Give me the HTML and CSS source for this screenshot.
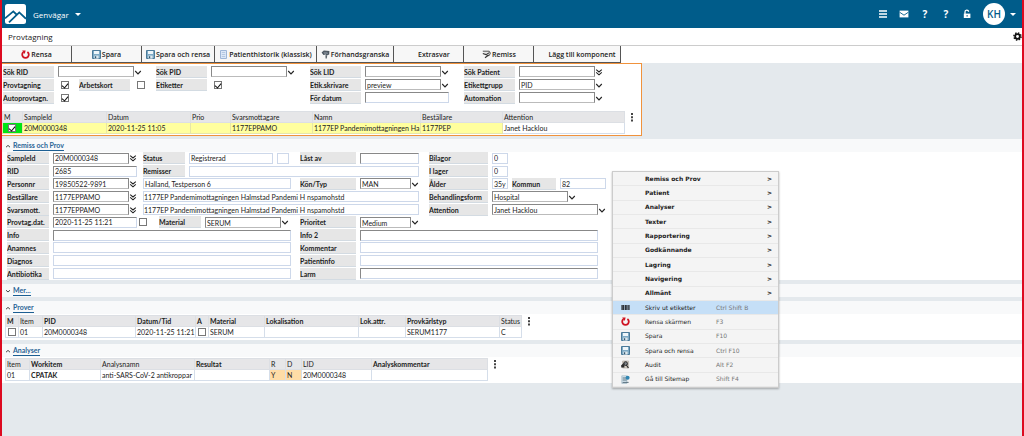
FILE: index.html
```html
<!DOCTYPE html>
<html lang="sv">
<head>
<meta charset="utf-8">
<title>Provtagning</title>
<link rel="stylesheet" href="styles.css">
</head>
<body>
<svg class="defs" aria-hidden="true">
  <symbol id="chev" viewBox="0 0 8 8"><path d="M1.2 3 4 6 6.8 3" fill="none" stroke="#222" stroke-width="1.1"/></symbol>
  <symbol id="dchev" viewBox="0 0 8 8"><path d="M1.2 1.6 4 4 6.8 1.6M1.2 4.4 4 6.8 6.8 4.4" fill="none" stroke="#222" stroke-width="1.1"/></symbol>
  <symbol id="up" viewBox="0 0 6 6"><path d="M1 4.2 3 2.4 5 4.2" fill="none" stroke="#333" stroke-width=".9"/></symbol>
  <symbol id="down" viewBox="0 0 6 6"><path d="M1 2.2 3 4 5 2.2" fill="none" stroke="#333" stroke-width=".9"/></symbol>
  <symbol id="reset" viewBox="0 0 9 9"><path d="M2.6 1.9A3.3 3.3 0 1 0 6.4 1.9" fill="none" stroke="#cf1322" stroke-width="1.8"/><path d="M1.2.4 4.6.6 3.8 4z" fill="#cf1322"/></symbol>
  <symbol id="save" viewBox="0 0 9 9"><path d="M.5.5h8v8h-8z" fill="#7fabc6" stroke="#4b7a99"/><path d="M2 1h5v3H2z" fill="#eef6fa"/><path d="M2.4 5.6h4.2v3H2.4z" fill="#dde8ee"/><path d="M3 6.2h1.2v2H3z" fill="#32566e"/></symbol>
  <symbol id="doc" viewBox="0 0 9 9"><path d="M1.5.5h6v8h-6z" fill="#dce8f8" stroke="#9db6d8"/><path d="M2.8 2.5h3.4M2.8 4.5h3.4M2.8 6.5h3.4" stroke="#a9bfdc" stroke-width=".8"/></symbol>
  <symbol id="preview" viewBox="0 0 9 9"><path d="M.6 2.4 2.8.6 8.4 1 8.2 4.4 5.6 5.6 4.8 4.6 2.4 5z" fill="#4d5761"/><path d="M2.5 2.4h4M3 3.6h4" stroke="#9aa5ae" stroke-width=".6"/><path d="M4.4 5.2h1.8L5.8 8.6H4.6z" fill="#59636b"/></symbol>
  <symbol id="remiss" viewBox="0 0 9 9"><path d="M.8 1.2h6.4l1.2 2-1.2 2.4H4.6" fill="#e7e7e7" stroke="#444" stroke-width=".9"/><path d="M.8 3.4 4 4.6 7.4 2.6M3 7.8 6.6 5" fill="none" stroke="#333" stroke-width="1.1"/></symbol>
  <symbol id="barcode" viewBox="0 0 9 9"><path d="M.4 2h3v5h-3zM4 2h1.8v5H4zM6.4 2h2.2v5H6.4z" fill="#2e3238"/><path d="M1.6 2v5M7.5 2v5" stroke="#7b8694" stroke-width=".4"/></symbol>
  <symbol id="audit" viewBox="0 0 9 9"><path d="M1.6 1h6v7h-6z" fill="#d9d2c8" stroke="#aaa198" stroke-width=".6"/><circle cx="4.6" cy="3.6" r="1.9" fill="#7a7f84" stroke="#2c2c2c"/><path d="M1 5.2 3.4 3.6M5.4 5 7.4 8M.8 5.6h2v1.2h-2z" fill="none" stroke="#2c2c2c" stroke-width="1.2"/></symbol>
  <symbol id="sitemap" viewBox="0 0 9 9"><path d="M.8.8h5v7.6h-5z" fill="#d6e6ef" stroke="#8fa9b8" stroke-width=".6"/><path d="M1.6 3h3.4M1.6 5h4M1.6 7.4h6" stroke="#4d6472" stroke-width=".9"/><circle cx="6.6" cy="2.8" r="2" fill="#2f86b3"/></symbol>
  <symbol id="dots" viewBox="0 0 4 9"><path d="M1 0h2v2H1zM1 3.3h2v2H1zM1 6.6h2v2H1z" fill="#444"/></symbol>
</svg>

<header class="topbar">
  <svg class="logo" viewBox="0 0 21 20" role="img" aria-label="Logotyp"><rect width="21" height="20" rx="2.5" fill="#fff"/><path d="M0 14.4 8.3 7.4 12 11M4 18.4 14.3 8.4 21 14.8" fill="none" stroke="#005c8a" stroke-width="1.8"/></svg>
  <button class="shortcuts">Genvägar <span class="caret"></span></button>
  <nav class="tools" aria-label="Verktyg">
    <button aria-label="Meny"><svg viewBox="0 0 10 10"><path d="M1 2h8M1 5h8M1 8h8" stroke="#fff" stroke-width="1.5"/></svg></button>
    <button aria-label="Meddelanden"><svg viewBox="0 0 10 10"><path d="M.6 1.6h8.8v6.8H.6z" fill="#fff"/><path d="M.6 3.2 5 6.2 9.4 3.2" fill="none" stroke="#005c8a" stroke-width=".9"/></svg></button>
    <button class="q">?</button>
    <button class="q">?</button>
    <button aria-label="Lås"><svg viewBox="0 0 10 10"><path d="M1.8 4.6h6.6v4.4H1.8z" fill="#fff"/><path d="M3 5V3a1.8 1.8 0 0 1 3.6-.2" fill="none" stroke="#fff" stroke-width="1.3"/><path d="M5.1 6v1.6" stroke="#005c8a"/></svg></button>
    <button class="user"><span class="avatar">KH</span><span class="caret"></span></button>
  </nav>
</header>

<div class="titlebar">
  <h1>Provtagning</h1>
  <button class="gear" aria-label="Inställningar"><svg viewBox="0 0 10 10"><circle cx="5" cy="5" r="2.6" fill="none" stroke="#111" stroke-width="2"/><circle cx="5" cy="5" r="4" fill="none" stroke="#111" stroke-width="1.6" stroke-dasharray="1.6 1.54"/></svg></button>
</div>

<div class="toolbar">
  <button><svg><use href="#reset"/></svg>Rensa</button>
  <button><svg><use href="#save"/></svg>Spara</button>
  <button><svg><use href="#save"/></svg>Spara och rensa</button>
  <button><svg><use href="#doc"/></svg>Patienthistorik (klassisk)</button>
  <button><svg><use href="#preview"/></svg>Förhandsgranska</button>
  <button><svg></svg>Extrasvar</button>
  <button><svg><use href="#remiss"/></svg>Remiss</button>
  <button><svg></svg>Lägg till komponent</button>
</div>

<main>
  <section class="search">
    <div class="filters">
      <div class="cell"><label for="s1">Sök RID</label><span class="combo"><select id="s1"><option></option></select><svg><use href="#chev"/></svg></span></div>
      <div class="cell"><label for="s2">Sök PID</label><span class="combo"><select id="s2"><option></option></select><svg><use href="#chev"/></svg></span></div>
      <div class="cell"><label for="s3">Sök LID</label><span class="combo"><select id="s3"><option></option></select><svg><use href="#chev"/></svg></span></div>
      <div class="cell"><label for="s4">Sök Patient</label><span class="combo"><input id="s4"><button aria-label="Sök"><svg><use href="#dchev"/></svg></button></span></div>

      <div class="cell"><label for="c1">Provtagning</label><input type="checkbox" id="c1" checked><label for="c2">Arbetskort</label><input type="checkbox" id="c2"></div>
      <div class="cell"><label for="c3">Etiketter</label><input type="checkbox" id="c3" checked></div>
      <div class="cell"><label for="s5">Etik.skrivare</label><span class="combo"><select id="s5"><option>preview</option></select><svg><use href="#chev"/></svg></span></div>
      <div class="cell"><label for="s6">Etikettgrupp</label><span class="combo"><select id="s6"><option>PID</option></select><svg><use href="#chev"/></svg></span></div>

      <div class="cell"><label for="c4">Autoprovtagn.</label><input type="checkbox" id="c4" checked></div>
      <div class="cell"></div>
      <div class="cell"><label for="s7">För datum</label><input class="full sunk" id="s7"></div>
      <div class="cell"><label for="s8">Automation</label><span class="combo"><select id="s8"><option></option></select><svg><use href="#chev"/></svg></span></div>
    </div>
    <div class="tablewrap">
      <table class="grid results">
        <colgroup><col class="c20"><col class="c84"><col class="c84"><col class="c40"><col class="c82"><col class="c108"><col class="c82"><col class="c122"></colgroup>
        <thead><tr><th>M</th><th>SampleId</th><th>Datum</th><th>Prio</th><th>Svarsmottagare</th><th>Namn</th><th>Beställare</th><th>Attention</th></tr></thead>
        <tbody><tr class="hit"><td class="mark"><input type="checkbox" aria-label="Markera 20M0000348" checked></td><td>20M0000348</td><td>2020-11-25 11:05</td><td></td><td>1177EPPAMO</td><td>1177EP Pandemimottagningen Ha</td><td>1177PEP</td><td class="plain">Janet Hacklou</td></tr></tbody>
      </table>
      <button class="more" aria-label="Fler val"><svg><use href="#dots"/></svg></button>
    </div>
  </section>

  <section class="panel">
    <h2><svg><use href="#up"/></svg><a href="#remiss-prov">Remiss och Prov</a></h2>
    <div class="form" id="remiss-prov">
      <div class="row">
        <div class="left"><label for="f1">SampleId</label><span class="combo"><input id="f1" value="20M0000348"><button aria-label="Välj"><svg><use href="#dchev"/></svg></button></span><label for="f2">Status</label><input class="w84" id="f2" value="Registrerad"><input class="w12" aria-label="Statuskod"></div>
        <div class="mid"><label for="f3">Låst av</label><input class="w59 sunk" id="f3"></div>
        <div class="right"><label for="f4">Bilagor</label><input class="w16" id="f4" value="0"></div>
      </div>
      <div class="row">
        <div class="left joined"><label for="g1">RID</label><input class="full sunk" id="g1" value="2685"><label for="g2">Remisser</label><input class="grow open" id="g2"></div>
        <div class="mid rest"><input class="grow tail" aria-label="Remisser, fortsättning"></div>
        <div class="right"><label for="g3">I lager</label><input class="w16" id="g3" value="0"></div>
      </div>
      <div class="row">
        <div class="left"><label for="h1">Personnr</label><span class="combo"><input id="h1" value="19850522-9891"><button aria-label="Välj"><svg><use href="#dchev"/></svg></button></span><input class="grow" aria-label="Namn" value="Halland, Testperson 6"></div>
        <div class="mid"><label for="h2">Kön/Typ</label><span class="combo short"><select id="h2"><option>MAN</option></select><svg><use href="#chev"/></svg></span></div>
        <div class="right"><label for="h3">Ålder</label><input class="w16" id="h3" value="35y"><label class="narrow" for="h4">Kommun</label><input class="w46" id="h4" value="82"></div>
      </div>
      <div class="row">
        <div class="left joined"><label for="i1">Beställare</label><span class="combo"><input id="i1" value="1177EPPAMO"><button aria-label="Välj"><svg><use href="#dchev"/></svg></button></span><input class="grow open" aria-label="Beställarens namn" value="1177EP Pandemimottagningen Halmstad Pandemi H"></div>
        <div class="mid rest"><input class="grow tail" aria-label="Beställarkod" value="nspamohstd"></div>
        <div class="right"><label for="i2">Behandlingsform</label><span class="combo"><select id="i2"><option>Hospital</option></select><svg><use href="#chev"/></svg></span></div>
      </div>
      <div class="row">
        <div class="left joined"><label for="j1">Svarsmott.</label><span class="combo"><input id="j1" value="1177EPPAMO"><button aria-label="Välj"><svg><use href="#dchev"/></svg></button></span><input class="grow open" aria-label="Svarsmottagarens namn" value="1177EP Pandemimottagningen Halmstad Pandemi H"></div>
        <div class="mid rest"><input class="grow tail" aria-label="Svarsmottagarkod" value="nspamohstd"></div>
        <div class="right"><label for="j2">Attention</label><span class="combo long"><select id="j2"><option>Janet Hacklou</option></select><svg><use href="#chev"/></svg></span></div>
      </div>
      <div class="row">
        <div class="left"><label for="k1">Provtag.dat.</label><input class="full sunk" id="k1" value="2020-11-25 11:21"><input type="checkbox" class="datecheck" aria-label="Provtagningsdatum"><label for="k2">Material</label><span class="combo"><select id="k2"><option>SERUM</option></select><svg><use href="#chev"/></svg></span></div>
        <div class="mid"><label for="k3">Prioritet</label><span class="combo short"><select id="k3"><option>Medium</option></select><svg><use href="#chev"/></svg></span></div>
      </div>
      <div class="row">
        <div class="left"><label for="l1">Info</label><input class="grow sunk" id="l1"></div>
        <div class="mid wide"><label for="l2">Info 2</label><input class="grow sunk" id="l2"></div>
      </div>
      <div class="row">
        <div class="left"><label for="m1">Anamnes</label><input class="grow" id="m1"></div>
        <div class="mid wide"><label for="m2">Kommentar</label><input class="grow" id="m2"></div>
      </div>
      <div class="row">
        <div class="left"><label for="n1">Diagnos</label><input class="grow" id="n1"></div>
        <div class="mid wide"><label for="n2">Patientinfo</label><input class="grow" id="n2"></div>
      </div>
      <div class="row">
        <div class="left"><label for="o1">Antibiotika</label><input class="grow" id="o1"></div>
        <div class="mid wide"><label for="o2">Larm</label><input class="grow sunk" id="o2"></div>
      </div>
    </div>
  </section>

  <section class="panel">
    <h2><svg><use href="#down"/></svg><a href="#mer">Mer...</a></h2>
  </section>

  <section class="panel">
    <h2><svg><use href="#up"/></svg><a href="#prover">Prover</a></h2>
    <div class="tablewrap" id="prover">
      <table class="grid samples">
        <colgroup><col class="c13"><col class="c24"><col class="c93"><col class="c60"><col class="c13"><col class="c56"><col class="c94"><col class="c47"><col class="c94"><col class="c22"></colgroup>
        <thead><tr><th class="b">M</th><th>Item</th><th class="b">PID</th><th class="b">Datum/Tid</th><th class="b">A</th><th class="b">Material</th><th class="b">Lokalisation</th><th class="b">Lok.attr.</th><th class="b">Provkärlstyp</th><th>Status</th></tr></thead>
        <tbody><tr><td><input type="checkbox" aria-label="M"></td><td>01</td><td>20M0000348</td><td>2020-11-25 11:21</td><td><input type="checkbox" aria-label="A"></td><td>SERUM</td><td></td><td></td><td>SERUM1177</td><td>C</td></tr></tbody>
      </table>
      <button class="more" aria-label="Fler val"><svg><use href="#dots"/></svg></button>
    </div>
  </section>

  <section class="panel">
    <h2><svg><use href="#up"/></svg><a href="#analyser">Analyser</a></h2>
    <div class="tablewrap" id="analyser">
      <table class="grid analyses">
        <colgroup><col class="c24"><col class="c71"><col class="c94"><col class="c75"><col class="c16"><col class="c16"><col class="c70"><col class="c116"></colgroup>
        <thead><tr><th>Item</th><th class="b">Workitem</th><th>Analysnamn</th><th class="b">Resultat</th><th>R</th><th>D</th><th>LID</th><th class="b">Analyskommentar</th></tr></thead>
        <tbody><tr><td>01</td><td class="b">CPATAK</td><td>anti-SARS-CoV-2 antikroppar</td><td></td><td class="flag">Y</td><td class="flag">N</td><td>20M0000348</td><td></td></tr></tbody>
      </table>
      <button class="more" aria-label="Fler val"><svg><use href="#dots"/></svg></button>
    </div>
  </section>
</main>

<div class="menu" role="menu">
  <button class="sub" role="menuitem">Remiss och Prov<span>&gt;</span></button>
  <button class="sub" role="menuitem">Patient<span>&gt;</span></button>
  <button class="sub" role="menuitem">Analyser<span>&gt;</span></button>
  <button class="sub" role="menuitem">Texter<span>&gt;</span></button>
  <button class="sub" role="menuitem">Rapportering<span>&gt;</span></button>
  <button class="sub" role="menuitem">Godkännande<span>&gt;</span></button>
  <button class="sub" role="menuitem">Lagring<span>&gt;</span></button>
  <button class="sub" role="menuitem">Navigering<span>&gt;</span></button>
  <button class="sub" role="menuitem">Allmänt<span>&gt;</span></button>
  <button class="act on" role="menuitem"><svg><use href="#barcode"/></svg><b>Skriv ut etiketter</b><kbd>Ctrl Shift B</kbd></button>
  <button class="act" role="menuitem"><svg><use href="#reset"/></svg><b>Rensa skärmen</b><kbd>F3</kbd></button>
  <button class="act" role="menuitem"><svg><use href="#save"/></svg><b>Spara</b><kbd>F10</kbd></button>
  <button class="act" role="menuitem"><svg><use href="#save"/></svg><b>Spara och rensa</b><kbd>Ctrl F10</kbd></button>
  <button class="act" role="menuitem"><svg><use href="#audit"/></svg><b>Audit</b><kbd>Alt F2</kbd></button>
  <button class="act" role="menuitem"><svg><use href="#sitemap"/></svg><b>Gå till Sitemap</b><kbd>Shift F4</kbd></button>
</div>
</body>
</html>
```

FILE: styles.css
```css
* { box-sizing: border-box; }

body {
  margin: 0;
  min-height: 100vh;
  border: solid #dd0a20;
  border-width: 0 2px;
  background: #e4e9ed;
  color: #222;
  font: 7px/9px "Open Sans", sans-serif;
}
main { font-family: Lato, sans-serif; }

button, input, select {
  margin: 0;
  padding: 0;
  border: 0;
  border-radius: 0;
  background: none;
  color: inherit;
  font: inherit;
}

.defs { display: none; }

/* top bar */
.topbar {
  display: flex;
  align-items: center;
  height: 28px;
  padding: 0 6px 0 3px;
  background: #005c8a;
  color: #fff;
}
.logo { width: 21px; height: 20px; }
.shortcuts { display: flex; align-items: center; gap: 6px; margin-left: 7px; font-size: 8px; }
.caret { border: 3px solid transparent; border-top-color: #fff; border-bottom: 0; }
.tools { display: flex; align-items: center; gap: 11px; margin-left: auto; }
.tools svg { display: block; width: 10px; height: 10px; }
.q { width: 10px; font-weight: 700; font-size: 10px; line-height: 10px; }
.user { display: flex; align-items: center; gap: 5px; }
.avatar {
  width: 22px;
  border-radius: 50%;
  background: #fff;
  color: #005c8a;
  font-weight: 600;
  font-size: 10px;
  line-height: 22px;
}

/* title and toolbar */
.titlebar {
  display: flex;
  align-items: center;
  justify-content: space-between;
  height: 17px;
  padding: 0 0 0 6px;
  background: #fff;
}
.titlebar h1 { margin: 0; font-weight: 400; font-size: 8px; }
.gear svg { display: block; width: 9px; height: 9px; }
.toolbar { display: flex; height: 18px; border-top: 1px solid #ccc; background: #fff; }
.toolbar button {
  display: flex;
  align-items: center;
  justify-content: center;
  gap: 1px;
  min-width: 70px;
  padding: 0 4px;
  border: solid #555;
  border-width: 0 1px 1px 0;
  background: #f7f7f7;
  font-weight: 600;
}
.toolbar svg { width: 9px; height: 9px; }

/* labels and fields */
label {
  flex: none;
  width: 42px;
  height: 12px;
  overflow: hidden;
  border-bottom: 1px solid #d3dbe2;
  background: #e6e6e6;
  font-weight: 700;
  line-height: 12px;
  white-space: nowrap;
}
input, select {
  height: 11px;
  padding: 0 1px;
  border: 1px solid #cdd8ea;
  background: #fff;
  line-height: 9px;
}
select { padding-top: 1px; appearance: none; }
.combo { display: flex; flex: none; align-items: center; width: 84px; }
.combo input, .combo select {
  flex: 1;
  min-width: 0;
  border: 1px solid #888;
  border-bottom-color: #bbb;
}
.combo svg { display: block; flex: none; width: 8px; height: 8px; }
.combo.short { width: 59px; }
.combo.long { width: 114px; }
.sunk { border-top-color: #888; border-left-color: #888; }
.full { width: 84px; }
.w12 { width: 12px; }
.w16 { width: 16px; }
.w46 { width: 46px; }
.w59 { width: 59px; }
.w84 { width: 84px; }
.grow { flex: 1; min-width: 0; }
.open { padding: 0; border-right: 0; }
.tail { border-left: 0; }
input[type="checkbox"] {
  display: flex;
  flex: none;
  justify-content: center;
  width: 8px;
  height: 8px;
  appearance: none;
  border: 1px solid #777;
  background: #fff;
}
input[type="checkbox"]:checked::before {
  width: 3px;
  height: 5px;
  border: solid #111;
  border-width: 0 1px 1px 0;
  content: "";
  transform: rotate(40deg);
}

/* search box */
.search {
  width: max-content;
  padding: 1px 7px 1px 0;
  border: 1px solid #f0923c;
  border-left: 0;
  background: #fff;
}
.filters {
  display: grid;
  grid-template: repeat(3, 13px) / 153px 154px 154px 153px;
  padding-left: 1px;
}
.cell { display: flex; align-items: center; gap: 4px; }
.cell label { width: 51px; }
.cell input[type="checkbox"] { margin: 0 6px 0 3px; }

/* tables */
.tablewrap { display: flex; align-items: flex-start; gap: 5px; }
.search .tablewrap { margin-top: 7px; }
.grid { border-collapse: collapse; table-layout: fixed; }
.grid th, .grid td {
  height: 11px;
  padding: 0 0 0 1px;
  overflow: hidden;
  border: 1px solid #d5deea;
  font-weight: 400;
  line-height: 9px;
  text-align: left;
  white-space: nowrap;
}
.grid th { border-color: #dcdfe4; background: #e6e6e8; }
.grid .b { font-weight: 700; }
.results { width: 622px; }
.samples { width: 516px; }
.analyses { width: 482px; }
.hit td { border-color: #e6e6a8; background: #ffff9e; }
.hit .mark { padding-left: 5px; background: #00e414; }
.hit .plain { border-color: #d5deea; background: #fff; }
.samples td input[type="checkbox"] { margin-left: 1px; }
.grid .flag { background: #ffdca6; }
.c13 { width: 13px; }
.c16 { width: 16px; }
.c20 { width: 20px; }
.c22 { width: 22px; }
.c24 { width: 24px; }
.c40 { width: 40px; }
.c47 { width: 47px; }
.c56 { width: 56px; }
.c60 { width: 60px; }
.c70 { width: 70px; }
.c71 { width: 71px; }
.c75 { width: 75px; }
.c82 { width: 82px; }
.c84 { width: 84px; }
.c93 { width: 93px; }
.c94 { width: 94px; }
.c108 { width: 108px; }
.c116 { width: 116px; }
.c122 { width: 122px; }
.more svg { display: block; width: 4px; height: 9px; margin-top: 2px; }

/* panels */
.panel { margin-top: 3px; background: #fff; }
.panel + .panel { margin-top: 4px; }
.panel .tablewrap { padding: 1px 0 2px 3px; }
.panel h2 {
  display: flex;
  align-items: center;
  gap: 2px;
  height: 13px;
  margin: 0;
  padding-left: 3px;
  background: #f8f9fa;
  font-weight: 700;
  font-size: 7px;
}
.panel h2 svg { width: 6px; height: 6px; }
.panel h2 a { border-bottom: 1px solid #1d5f93; color: #2a6496; line-height: 10px; text-decoration: none; }

/* form */
.form { display: grid; grid-auto-rows: 1fr; min-height: 128px; padding-left: 5px; }
.row { display: flex; align-items: center; }
.left, .mid, .right { display: flex; align-items: center; gap: 4px; }
.left { width: 284px; margin-right: 9px; }
.left.joined { width: 299px; margin-right: 0; }
.left > :nth-child(3) { margin-left: 2px; }
.left > .datecheck { margin: 0 8px 0 -2px; }
.mid { width: 119px; margin-right: 10px; }
.mid.rest { width: 113px; }
.mid.wide { width: 298px; }
.mid label { width: 56px; }
.right label { width: 59px; }
.right .narrow { width: 44px; }

/* context menu */
.menu {
  position: absolute;
  top: 171px;
  left: 612px;
  display: grid;
  grid-auto-rows: 1fr;
  width: 167px;
  min-height: 217px;
  border: 1px solid #ccc;
  background: #f4f4f4;
  box-shadow: 0 1px 2px rgba(0, 0, 0, .3);
  font: 6px/8px "DejaVu Sans", sans-serif;
}
.menu button { display: flex; align-items: center; border-bottom: 1px solid #e8e8e8; text-align: left; }
.menu .sub { justify-content: space-between; padding: 0 6px 0 32px; font-weight: 700; }
.menu .act { padding-left: 8px; }
.menu .on { background: #c5dff7; }
.menu svg { width: 9px; height: 9px; margin-right: 15px; }
.menu b { width: 71px; font-weight: 400; }
.menu kbd { color: #777; font: inherit; }
```
